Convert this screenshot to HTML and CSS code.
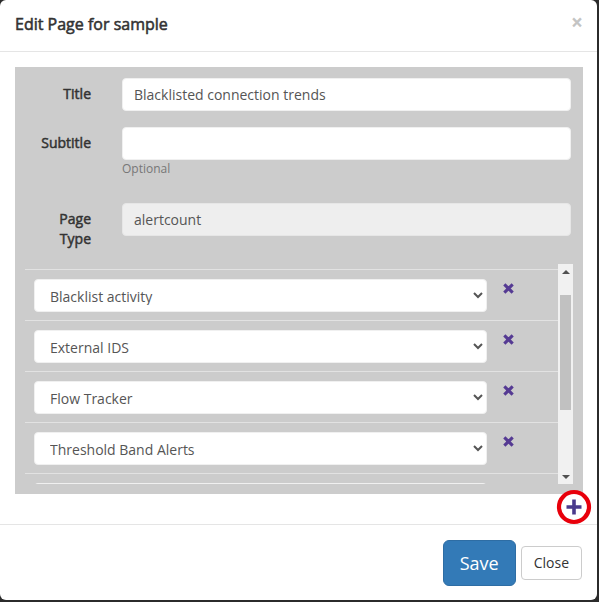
FILE: index.html
```html
<!DOCTYPE html>
<html>
<head>
<meta charset="utf-8">
<link rel="stylesheet" href="styles.css">
</head>
<body>
<div class="modal">
  <div class="modal-header">
    <h4 class="modal-title">Edit Page for sample</h4>
    <span class="close">×</span>
  </div>
  <div class="modal-body">
    <div class="panel">
      <div class="form-group">
        <label class="label">Title</label>
        <div class="field"><input class="form-control" type="text" value="Blacklisted connection trends"></div>
      </div>
      <div class="form-group group-sub">
        <label class="label">Subtitle</label>
        <div class="field">
          <input class="form-control" type="text" value="">
          <span class="help">Optional</span>
        </div>
      </div>
      <div class="form-group group-type">
        <label class="label">Page Type</label>
        <div class="field"><input class="form-control" type="text" value="alertcount" disabled></div>
      </div>
      <div class="list-wrap">
        <div class="list" id="list">
          <div class="row">
            <select class="form-control select"><option>Blacklist activity</option></select>
            <svg class="remove" viewBox="0 0 10 10"><path d="M1.2 1.2L8.8 8.8M8.8 1.2L1.2 8.8"/></svg>
          </div>
          <div class="row">
            <select class="form-control select"><option>External IDS</option></select>
            <svg class="remove" viewBox="0 0 10 10"><path d="M1.2 1.2L8.8 8.8M8.8 1.2L1.2 8.8"/></svg>
          </div>
          <div class="row">
            <select class="form-control select"><option>Flow Tracker</option></select>
            <svg class="remove" viewBox="0 0 10 10"><path d="M1.2 1.2L8.8 8.8M8.8 1.2L1.2 8.8"/></svg>
          </div>
          <div class="row">
            <select class="form-control select"><option>Threshold Band Alerts</option></select>
            <svg class="remove" viewBox="0 0 10 10"><path d="M1.2 1.2L8.8 8.8M8.8 1.2L1.2 8.8"/></svg>
          </div>
          <div class="row">
            <select class="form-control select"><option>Watchlist Hits</option></select>
            <svg class="remove" viewBox="0 0 10 10"><path d="M1.2 1.2L8.8 8.8M8.8 1.2L1.2 8.8"/></svg>
          </div>
          <div class="row">
            <select class="form-control select"><option>Port Scan Alerts</option></select>
            <svg class="remove" viewBox="0 0 10 10"><path d="M1.2 1.2L8.8 8.8M8.8 1.2L1.2 8.8"/></svg>
          </div>
        </div>
        <div class="scrollbar">
          <div class="sb-btn"><span class="tri-up"></span></div>
          <div class="sb-track"><div class="sb-thumb"></div></div>
          <div class="sb-btn"><span class="tri-down"></span></div>
        </div>
      </div>
    </div>
    <div class="add-row">
      <svg class="add" viewBox="0 0 36 36">
        <circle cx="18" cy="18" r="15" fill="#fff" stroke="#e8000b" stroke-width="4.2"/>
        <path d="M18 10.5V25.5M10.5 18H25.5" stroke="#4a3a8c" stroke-width="3.6" fill="none"/>
      </svg>
    </div>
  </div>
  <div class="modal-footer">
    <button class="btn btn-primary">Save</button>
    <button class="btn btn-default">Close</button>
  </div>
</div>
<script>document.getElementById('list').scrollTop = 31;</script>
</body>
</html>
```
FILE: styles.css
```css
* { box-sizing: border-box; }
html, body { margin: 0; padding: 0; }
body {
  background: #2b2b2b;
  font-family: "Open Sans", "Liberation Sans", sans-serif;
  font-size: 14px;
  color: #333;
  width: 599px;
  height: 602px;
  overflow: hidden;
}
.modal {
  width: 597px;
  background: #fff;
  border-radius: 6px;
}
.modal-header {
  display: flex;
  justify-content: space-between;
  align-items: flex-start;
  padding: 14px 15px 16px 15px;
  border-bottom: 1px solid #e5e5e5;
}
.modal-title {
  margin: 0;
  font-size: 16px;
  line-height: 21px;
  font-weight: 400;
  -webkit-text-stroke: 0.55px #333;
  color: #333;
}
.close {
  font-size: 21px;
  font-weight: 700;
  line-height: 14px;
  color: #c4c4c4;
  margin-top: 1px;
  margin-right: -1px;
}
.modal-body {
  padding: 15px 14px 0 15px;
}
.panel {
  background: #ccc;
  padding: 11px 12px 10px 0;
}
.form-group {
  display: grid;
  grid-template-columns: 107px 1fr;
  margin-bottom: 16px;
}
.group-sub { margin-bottom: 26px; }
.group-type { margin-bottom: 15px; }
.label {
  text-align: right;
  font-weight: 400;
  -webkit-text-stroke: 0.5px #333;
  padding: 6px 31px 0 17px;
  line-height: 20px;
  color: #333;
}
.group-sub .label, .group-type .label { padding-top: 6px; }
.field { display: flex; flex-direction: column; }
.form-control {
  display: block;
  width: 100%;
  height: 33px;
  padding: 6px 11px;
  font-family: "Open Sans", "Liberation Sans", sans-serif;
  font-size: 14px;
  color: #555;
  background: #fff;
  border: 1px solid #f0f0f0;
  border-radius: 4px;
  outline: none;
}
.form-control:disabled {
  background: #eee;
  border-color: #e6e6e6;
  color: #555;
}
.help {
  display: block;
  margin-top: 0;
  font-size: 12px;
  line-height: 17px;
  color: #777;
}
.list-wrap {
  display: flex;
  margin-left: 10px;
  margin-right: -2px;
  height: 220px;
}
.list {
  flex: 1;
  overflow: hidden;
  padding-top: 36px;
  padding-bottom: 23px;
}
.scrollbar {
  width: 15px;
  flex: none;
  display: flex;
  flex-direction: column;
  background: #f1f1f1;
}
.sb-btn {
  height: 15px;
  display: flex;
  align-items: center;
  justify-content: center;
}
.tri-up, .tri-down {
  width: 0;
  height: 0;
  border-left: 4px solid transparent;
  border-right: 4px solid transparent;
}
.tri-up { border-bottom: 4px solid #505050; }
.tri-down { border-top: 4px solid #505050; }
.sb-track { flex: 1; padding: 16px 2px 0; }
.sb-thumb { height: 115px; background: #c1c1c1; }
.row {
  display: flex;
  align-items: flex-start;
  border-top: 1px solid #e2e2e2;
  padding: 9px 0 8px 9px;
}
.select {
  width: 453px;
  flex: none;
  padding-left: 11px;
}
.remove {
  width: 11px;
  height: 11px;
  margin-left: 16px;
  margin-top: 4px;
  stroke: #553a93;
  stroke-width: 2.8;
  fill: none;
}
.add-row {
  display: flex;
  justify-content: flex-end;
  margin-top: -5px;
  margin-right: -9px;
  height: 35px;
}
.add {
  width: 36px;
  height: 36px;
}
.modal-footer {
  display: flex;
  justify-content: flex-end;
  align-items: center;
  gap: 5px;
  padding: 15px 15px 14px;
  border-top: 1px solid #e5e5e5;
}
.btn {
  font-family: "Open Sans", "Liberation Sans", sans-serif;
  cursor: pointer;
  border: 1px solid transparent;
}
.btn-primary {
  font-size: 18px;
  line-height: 24px;
  padding: 10px 16px;
  border-radius: 6px;
  color: #fff;
  background: #337ab7;
  border-color: #2e6da4;
}
.btn-default {
  font-size: 14px;
  line-height: 20px;
  padding: 6px 12px;
  border-radius: 4px;
  color: #333;
  background: #fff;
  border-color: #ccc;
}
```
